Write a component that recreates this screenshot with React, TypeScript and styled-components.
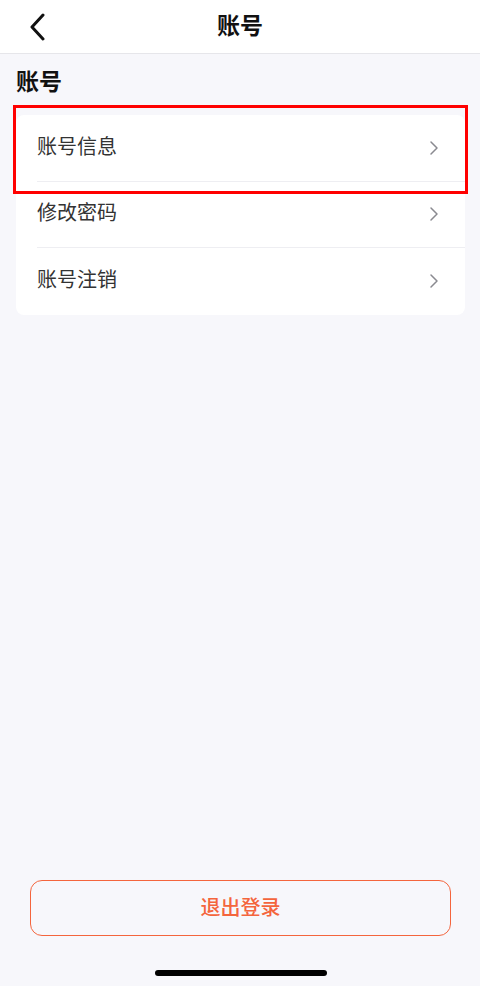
import React from "react";
import styled, { createGlobalStyle } from "styled-components";

const Global = createGlobalStyle`
  html, body { margin: 0; padding: 0; background: #f7f7fb; }
  body { font-family: "Noto Sans CJK SC", "Noto Sans", sans-serif; }
  * { box-sizing: border-box; }
`;

const Page = styled.div`
  position: relative;
  width: 480px;
  height: 986px;
  background: #f7f7fb;
  display: flex;
  flex-direction: column;
`;

const Header = styled.div`
  height: 54px;
  background: #ffffff;
  border-bottom: 1px solid #e6e6ea;
  display: flex;
  align-items: center;
  justify-content: center;
  position: relative;
  flex-shrink: 0;
  padding-bottom: 4px;
`;

const BackButton = styled.div`
  position: absolute;
  left: 24px;
  top: 13px;
  width: 26px;
  height: 28px;
  display: flex;
  align-items: center;
  justify-content: center;
`;

const Title = styled.div`
  font-size: 23px;
  font-weight: 700;
  color: #111;
  line-height: 1;
`;

const Content = styled.div`
  flex: 1;
  padding: 0 15px 0 16px;
  display: flex;
  flex-direction: column;
`;

const SectionTitle = styled.div`
  font-size: 23px;
  font-weight: 700;
  color: #111;
  height: 61px;
  display: flex;
  align-items: center;
  padding-bottom: 8px;
  line-height: 1;
`;

const Card = styled.div`
  position: relative;
  background: #fff;
  border-radius: 8px;
  overflow: hidden;
`;

const Row = styled.div<{ $last?: boolean }>`
  height: 66.5px;
  margin-left: 21px;
  padding-right: 26px;
  display: flex;
  align-items: center;
  justify-content: space-between;
  border-bottom: ${(p) => (p.$last ? "none" : "1px solid #eeeef2")};
`;

const RowLabel = styled.span`
  font-size: 20px;
  color: #333;
  line-height: 1;
  padding-bottom: 4px;
`;

const Highlight = styled.div`
  position: absolute;
  left: 13px;
  top: 105px;
  width: 455px;
  height: 89px;
  border: 3px solid #ff0000;
  pointer-events: none;
`;

const Footer = styled.div`
  padding: 0 29px 0 30px;
  display: flex;
  flex-direction: column;
  align-items: stretch;
`;

const LogoutButton = styled.button`
  height: 56px;
  border: 1px solid #f4653d;
  border-radius: 12px;
  background: transparent;
  color: #f4653d;
  font-family: "Noto Sans CJK SC", sans-serif;
  font-size: 20px;
  font-weight: 500;
  line-height: 1;
  display: flex;
  align-items: center;
  justify-content: center;
  padding: 0 0 3px;
`;

const HomeBar = styled.div`
  align-self: center;
  width: 172px;
  height: 6px;
  border-radius: 3px;
  background: #000;
  margin-top: 34px;
  margin-bottom: 10px;
`;

const Chevron = () => (
  <svg width="10" height="16" viewBox="0 0 10 16" fill="none">
    <path d="M2 2l6 6-6 6" stroke="#8a8a90" strokeWidth="1.5" strokeLinecap="round" strokeLinejoin="round" />
  </svg>
);

const items = ["账号信息", "修改密码", "账号注销"];

export default function App() {
  return (
    <>
      <Global />
      <Page>
        <Header>
          <BackButton>
            <svg width="18" height="28" viewBox="0 0 18 28" fill="none">
              <path d="M15 2L4 14l11 12" stroke="#111" strokeWidth="3" strokeLinecap="round" strokeLinejoin="round" />
            </svg>
          </BackButton>
          <Title>账号</Title>
        </Header>
        <Content>
          <SectionTitle>账号</SectionTitle>
          <Card>
            {items.map((t, i) => (
              <Row key={t} $last={i === items.length - 1}>
                <RowLabel>{t}</RowLabel>
                <Chevron />
              </Row>
            ))}
          </Card>
        </Content>
        <Footer>
          <LogoutButton>退出登录</LogoutButton>
          <HomeBar />
        </Footer>
        <Highlight />
      </Page>
    </>
  );
}
